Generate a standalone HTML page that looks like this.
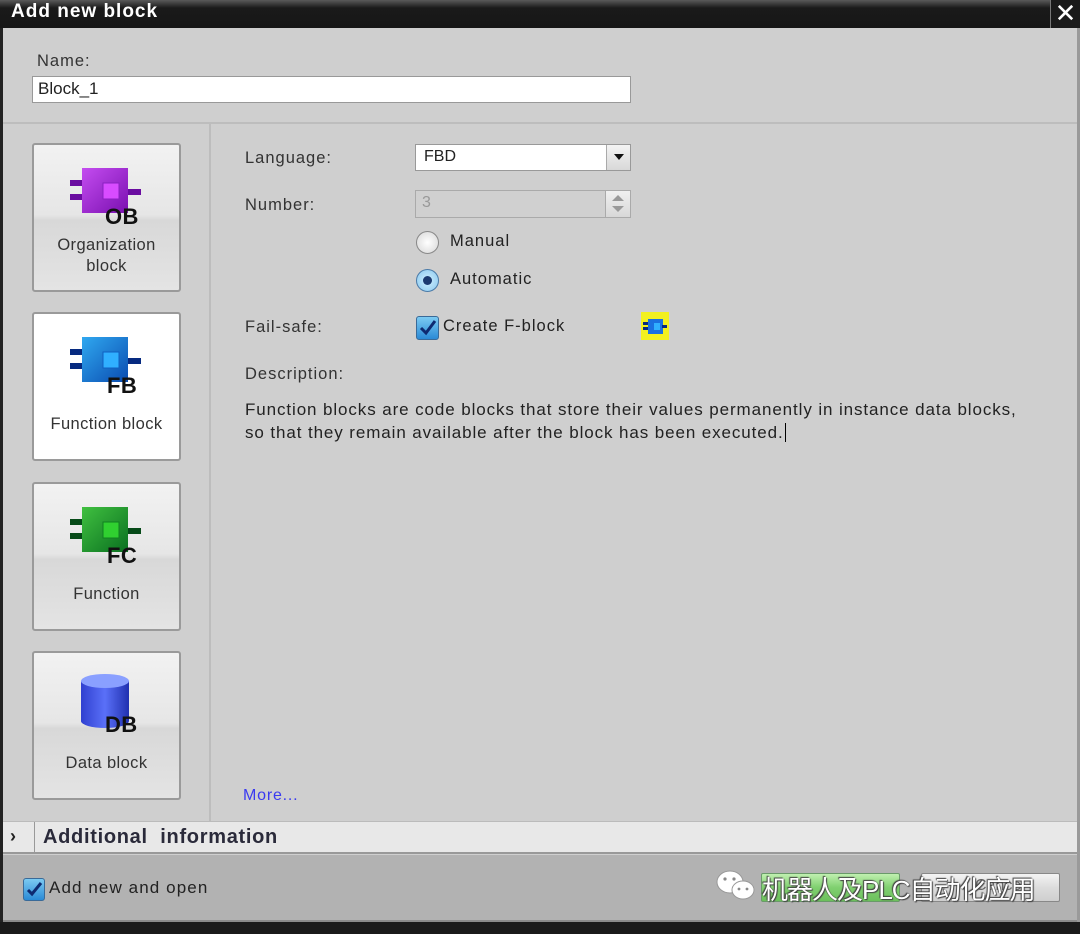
<!DOCTYPE html>
<html><head><meta charset="utf-8">
<style>
*{margin:0;padding:0;box-sizing:border-box}
body{width:1080px;height:934px;overflow:hidden;background:#cfcfcf;font-family:"Liberation Sans",sans-serif;color:#222;position:relative}
.abs{position:absolute}
.title{left:0;top:0;width:1080px;height:28px;background:linear-gradient(#5a5a5a 0,#3a3a3a 4px,#1a1a1a 8px,#161616);}
.title span{position:absolute;left:11px;top:1px;color:#fff;font-weight:bold;font-size:19px;letter-spacing:1px}
.close{left:1050px;top:0;width:30px;height:28px;background:#1a1a1a;border-left:1px solid #777;color:#fff;font-size:26px;line-height:26px;text-align:center}
.lb{left:0;top:28px;width:3px;height:900px;background:#222}
.rb{left:1077px;top:28px;width:3px;height:900px;background:#9a9a9a}
.lbl{font-size:16.5px;color:#333;letter-spacing:1px}
.btn{width:149px;height:149px;border:2px solid #9a9a9a;border-radius:3px;background:linear-gradient(#f2f2f2 0,#e6e6e6 48%,#d8d8d8 52%,#e4e4e4 100%);text-align:center;font-size:16.5px;color:#333;letter-spacing:.4px}
.btn.sel{background:#fff}
.btn svg{position:absolute;left:35px;top:20px}
.btn .t{position:absolute;left:0;width:145px}
.input{background:#fff;border:1px solid #999;font-size:17px}
.desc{font-size:17px;line-height:23px;color:#222;letter-spacing:.9px}
</style></head><body>
<div class="abs title"><span>Add new block</span></div>
<div class="abs close">✕</div>
<div class="abs lb"></div>
<div class="abs rb"></div>

<div class="abs lbl" style="left:37px;top:52px">Name:</div>
<div class="abs input" style="left:32px;top:76px;width:599px;height:27px;padding:2px 5px">Block_1</div>
<div class="abs" style="left:3px;top:122px;width:1074px;height:2px;background:#bdbdbd"></div>
<div class="abs" style="left:209px;top:124px;width:2px;height:698px;background:#bdbdbd"></div>

<div class="abs btn" style="left:32px;top:143px">
<svg width="80" height="66" viewBox="70 163 80 66" style="left:35px;top:20px">
<defs><linearGradient id="gp" x1="0" y1="0" x2="1" y2="1"><stop offset="0" stop-color="#c44cf0"/><stop offset="1" stop-color="#7a10b0"/></linearGradient></defs>
<rect x="71" y="178" width="13" height="6" fill="#6a0ca0"/><rect x="71" y="192" width="13" height="6" fill="#6a0ca0"/>
<rect x="128" y="187" width="14" height="6" fill="#6a0ca0"/>
<rect x="83" y="166" width="46" height="45" fill="url(#gp)"/>
<rect x="104" y="181" width="16" height="16" fill="#d84cff" stroke="#8a20c0"/>
<text x="106" y="222" font-family="Liberation Sans" font-weight="bold" font-size="22" fill="#111">OB</text>
</svg>
<div class="t" style="top:90px;line-height:21px">Organization<br>block</div>
</div>
<div class="abs btn sel" style="left:32px;top:312px">
<svg width="80" height="66" viewBox="70 163 80 66">
<defs><linearGradient id="gb" x1="0" y1="0" x2="1" y2="1"><stop offset="0" stop-color="#30a8f0"/><stop offset="1" stop-color="#0a4cb0"/></linearGradient></defs>
<rect x="71" y="178" width="13" height="6" fill="#062a80"/><rect x="71" y="192" width="13" height="6" fill="#062a80"/>
<rect x="128" y="187" width="14" height="6" fill="#062a80"/>
<rect x="83" y="166" width="46" height="45" fill="url(#gb)"/>
<rect x="104" y="181" width="16" height="16" fill="#30b0ff" stroke="#1060c0"/>
<text x="108" y="222" font-family="Liberation Sans" font-weight="bold" font-size="22" fill="#111">FB</text>
</svg>
<div class="t" style="top:101px">Function block</div>
</div>
<div class="abs btn" style="left:32px;top:482px">
<svg width="80" height="66" viewBox="70 163 80 66">
<defs><linearGradient id="gg" x1="0" y1="0" x2="1" y2="1"><stop offset="0" stop-color="#40c040"/><stop offset="1" stop-color="#0a7020"/></linearGradient></defs>
<rect x="71" y="178" width="13" height="6" fill="#064a18"/><rect x="71" y="192" width="13" height="6" fill="#064a18"/>
<rect x="128" y="187" width="14" height="6" fill="#064a18"/>
<rect x="83" y="166" width="46" height="45" fill="url(#gg)"/>
<rect x="104" y="181" width="16" height="16" fill="#30d030" stroke="#108020"/>
<text x="108" y="222" font-family="Liberation Sans" font-weight="bold" font-size="22" fill="#111">FC</text>
</svg>
<div class="t" style="top:101px">Function</div>
</div>
<div class="abs btn" style="left:32px;top:651px">
<svg width="80" height="66" viewBox="70 163 80 66">
<defs><linearGradient id="gd" x1="0" y1="0" x2="1" y2="0"><stop offset="0" stop-color="#3040d0"/><stop offset=".5" stop-color="#5a70f8"/><stop offset="1" stop-color="#2030b0"/></linearGradient></defs>
<path d="M82 171 v40 a24 7 0 0 0 48 0 v-40 z" fill="url(#gd)"/>
<ellipse cx="106" cy="171" rx="24" ry="7" fill="#8aa0ff"/>
<text x="106" y="222" font-family="Liberation Sans" font-weight="bold" font-size="22" fill="#111">DB</text>
</svg>
<div class="t" style="top:101px">Data block</div>
</div>

<div class="abs lbl" style="left:245px;top:149px">Language:</div>
<div class="abs input" style="left:415px;top:144px;width:216px;height:27px;padding:3px 8px;font-size:16px">FBD</div>
<div class="abs" style="left:606px;top:145px;width:24px;height:25px;background:linear-gradient(#f4f4f4,#d8d8d8);border-left:1px solid #aaa"><div style="position:absolute;left:7px;top:9px;border-left:5px solid transparent;border-right:5px solid transparent;border-top:6px solid #111"></div></div>

<div class="abs lbl" style="left:245px;top:196px">Number:</div>
<div class="abs" style="left:415px;top:190px;width:216px;height:28px;border:1px solid #aaa;background:#d0d0d0;color:#999;padding:3px 6px;font-size:16px">3</div>
<div class="abs" style="left:605px;top:191px;width:25px;height:26px;background:linear-gradient(#f0f0f0,#d8d8d8);border-left:1px solid #aaa">
<div style="position:absolute;left:6px;top:4px;border-left:6px solid transparent;border-right:6px solid transparent;border-bottom:6px solid #999"></div>
<div style="position:absolute;left:6px;top:15px;border-left:6px solid transparent;border-right:6px solid transparent;border-top:6px solid #999"></div></div>

<div class="abs" style="left:416px;top:231px;width:23px;height:23px;border-radius:50%;border:1px solid #888;background:radial-gradient(#fff,#d6d6d6)"></div>
<div class="abs lbl" style="left:450px;top:232px;color:#222">Manual</div>
<div class="abs" style="left:416px;top:269px;width:23px;height:23px;border-radius:50%;border:1px solid #4a7aa8;background:radial-gradient(#cfefff,#8ac8ee)"><div style="position:absolute;left:6px;top:6px;width:9px;height:9px;border-radius:50%;background:#1c3a70"></div></div>
<div class="abs lbl" style="left:450px;top:270px;color:#222">Automatic</div>

<div class="abs lbl" style="left:245px;top:318px">Fail-safe:</div>
<div class="abs" style="left:416px;top:316px;width:23px;height:24px;border:1px solid #3a6a98;border-radius:3px;background:linear-gradient(#7ccaf2,#2a8ad6)"><svg width="21" height="22" style="position:absolute;left:0;top:0"><path d="M4 11 L9 16 L18 4" stroke="#0e2a70" stroke-width="3" fill="none"/></svg></div>
<div class="abs lbl" style="left:443px;top:317px;color:#222">Create F-block</div>
<div class="abs" style="left:641px;top:312px;width:28px;height:28px;background:#f2f020"><svg width="28" height="28"><rect x="2" y="10" width="6" height="3" fill="#062a80"/><rect x="2" y="15" width="6" height="3" fill="#062a80"/><rect x="7" y="7" width="15" height="15" fill="#1a70e0"/><rect x="13" y="11" width="6" height="7" fill="#30b0ff"/><rect x="21" y="13" width="5" height="3" fill="#062a80"/></svg></div>

<div class="abs lbl" style="left:245px;top:365px">Description:</div>
<div class="abs desc" style="left:245px;top:398px;width:830px;white-space:nowrap">Function blocks are code blocks that store their values permanently in instance data blocks,<br>so that they remain available after the block has been executed.<span style="border-left:1px solid #000;margin-left:1px"></span></div>

<div class="abs" style="left:243px;top:787px;color:#3a3af0;font-size:16px;letter-spacing:.8px">More...</div>

<div class="abs" style="left:3px;top:821px;width:1074px;height:33px;background:#e8e8e8;border-top:1px solid #bbb;border-bottom:2px solid #999"></div>
<div class="abs" style="left:34px;top:822px;width:1px;height:31px;background:#999"></div>
<div class="abs" style="left:10px;top:826px;font-weight:bold;font-size:18px">›</div>
<div class="abs" style="left:43px;top:826px;font-size:20px;font-weight:bold;color:#2a2a3a;letter-spacing:.7px">Additional&nbsp; information</div>

<div class="abs" style="left:3px;top:855px;width:1074px;height:67px;background:#b2b2b2;border-bottom:2px solid #8a8a8a"></div>
<div class="abs" style="left:0;top:922px;width:1080px;height:12px;background:#1a1a1a"></div>

<div class="abs" style="left:23px;top:878px;width:22px;height:23px;border:1px solid #3a6a98;border-radius:3px;background:linear-gradient(#7ccaf2,#2a8ad6)"><svg width="20" height="21" style="position:absolute;left:0;top:0"><path d="M4 11 L8 15 L17 4" stroke="#0e2a70" stroke-width="3" fill="none"/></svg></div>
<div class="abs" style="left:49px;top:878px;font-size:17px;color:#222;letter-spacing:1.1px">Add new and open</div>

<div class="abs" style="left:761px;top:873px;width:139px;height:29px;border:1px solid #6a9a6a;border-radius:2px;background:linear-gradient(#c0f0b0,#80d070 50%,#6cc05c)"></div>
<div class="abs" style="left:921px;top:873px;width:139px;height:29px;border:1px solid #888;border-radius:2px;background:linear-gradient(#f4f4f4,#dcdcdc 50%,#cfcfcf)"></div>
<div class="abs" style="left:975px;top:877px;font-size:16px;color:#666">Cancel</div>
<svg class="abs" style="left:715px;top:868px" width="44" height="36"><ellipse cx="15" cy="14" rx="13" ry="11" fill="#fff" stroke="#999"/><ellipse cx="28" cy="22" rx="11" ry="9" fill="#fff" stroke="#999"/><circle cx="10" cy="11" r="1.6" fill="#888"/><circle cx="19" cy="11" r="1.6" fill="#888"/><circle cx="24" cy="21" r="1.4" fill="#888"/><circle cx="32" cy="21" r="1.4" fill="#888"/></svg>
<div class="abs" style="left:762px;top:870px;font-size:26px;color:#fff;font-family:'Liberation Sans','Noto Sans CJK SC',sans-serif;text-shadow:0 0 1px #333,1px 1px 1px #444,-1px -1px 1px #444;letter-spacing:-1px;white-space:nowrap">机器人及PLC自动化应用</div>
</body></html>
